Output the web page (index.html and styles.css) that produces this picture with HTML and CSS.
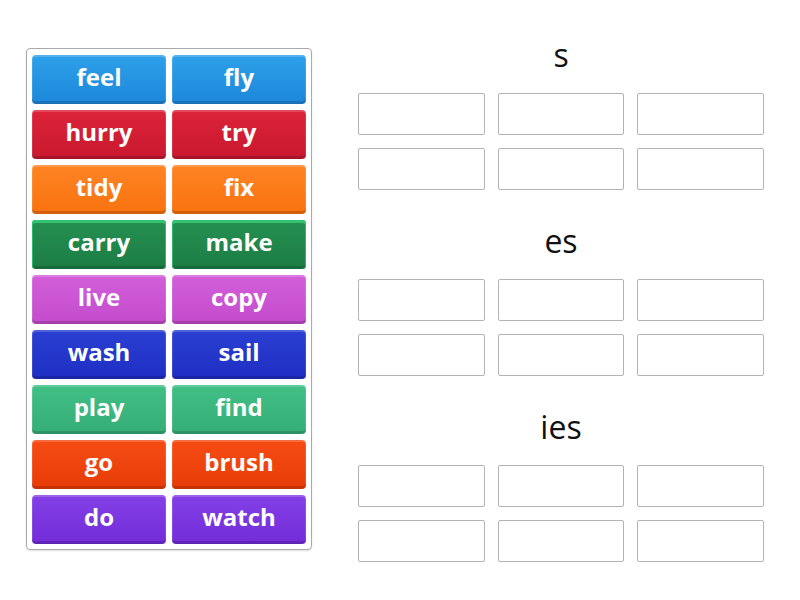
FILE: index.html
```html
<!DOCTYPE html>
<html>
<head>
<meta charset="utf-8">
<link rel="stylesheet" href="styles.css">
</head>
<body>
<div class="page">
  <div class="bank">
    <div class="tile blue">feel</div>
    <div class="tile blue">fly</div>
    <div class="tile red">hurry</div>
    <div class="tile red">try</div>
    <div class="tile orange">tidy</div>
    <div class="tile orange">fix</div>
    <div class="tile dgreen">carry</div>
    <div class="tile dgreen">make</div>
    <div class="tile pink">live</div>
    <div class="tile pink">copy</div>
    <div class="tile navy">wash</div>
    <div class="tile navy">sail</div>
    <div class="tile green">play</div>
    <div class="tile green">find</div>
    <div class="tile redorange">go</div>
    <div class="tile redorange">brush</div>
    <div class="tile purple">do</div>
    <div class="tile purple">watch</div>
  </div>
  <div class="groups">
    <div class="group">
      <div class="heading">s</div>
      <div class="slots">
        <div class="slot"></div><div class="slot"></div><div class="slot"></div>
        <div class="slot"></div><div class="slot"></div><div class="slot"></div>
      </div>
    </div>
    <div class="group">
      <div class="heading">es</div>
      <div class="slots">
        <div class="slot"></div><div class="slot"></div><div class="slot"></div>
        <div class="slot"></div><div class="slot"></div><div class="slot"></div>
      </div>
    </div>
    <div class="group">
      <div class="heading">ies</div>
      <div class="slots">
        <div class="slot"></div><div class="slot"></div><div class="slot"></div>
        <div class="slot"></div><div class="slot"></div><div class="slot"></div>
      </div>
    </div>
  </div>
</div>
</body>
</html>
```

FILE: styles.css
```css
html, body {
  margin: 0;
  padding: 0;
  background: #ffffff;
}
body {
  font-family: "Open Sans", "Liberation Sans", sans-serif;
  width: 800px;
  height: 600px;
  overflow: hidden;
}
.page {
  display: flex;
  align-items: flex-start;
  padding: 35px 0 0 26px;
  gap: 46px;
}
.bank {
  margin-top: 13px;
  width: 274px;
  border: 1px solid #a9a9a9;
  border-radius: 4px;
  padding: 6px 5px 5px 5px;
  display: grid;
  grid-template-columns: 1fr 1fr;
  column-gap: 6px;
  row-gap: 6px;
  box-shadow: 0 1px 2px rgba(0,0,0,0.12);
}
.tile {
  height: 49px;
  box-sizing: border-box;
  border-radius: 4px;
  color: #fdfdfd;
  font-weight: 700;
  font-size: 24px;
  display: flex;
  align-items: center;
  justify-content: center;
  padding-bottom: 6px;
  box-shadow: inset 0 2px 0 rgba(255,255,255,0.18), inset 1px 0 0 rgba(255,255,255,0.12), inset -1px 0 0 rgba(255,255,255,0.12), inset 0 -3px 0 rgba(0,0,0,0.16);
}
.blue { background: linear-gradient(#2ea0ea, #1d87da); }
.red { background: linear-gradient(#dc2339, #c8182f); }
.orange { background: linear-gradient(#ff8424, #f9720f); }
.dgreen { background: linear-gradient(#259052, #1c7d44); box-shadow: inset 0 3px 0 #34c471, inset 1px 0 0 #30b868, inset -1px 0 0 #30b868, inset 0 -3px 0 #176a39; }
.pink { background: linear-gradient(#d35fda, #c34bcc); }
.navy { background: linear-gradient(#2a40d2, #1f2ec4); }
.green { background: linear-gradient(#41c086, #35ad77); }
.redorange { background: linear-gradient(#f64c14, #e83c08); }
.purple { background: linear-gradient(#8440e6, #722cd9); }
.groups {
  width: 406px;
  display: flex;
  flex-direction: column;
  gap: 31px;
}
.heading {
  text-align: center;
  font-size: 32px;
  line-height: 40px;
  color: #111111;
  margin-bottom: 18px;
}
.slots {
  display: grid;
  grid-template-columns: 1fr 1fr 1fr;
  column-gap: 13px;
  row-gap: 13px;
}
.slot {
  height: 42px;
  box-sizing: border-box;
  border: 1px solid #b3b3b3;
  border-radius: 2px;
  background: #ffffff;
}
```
